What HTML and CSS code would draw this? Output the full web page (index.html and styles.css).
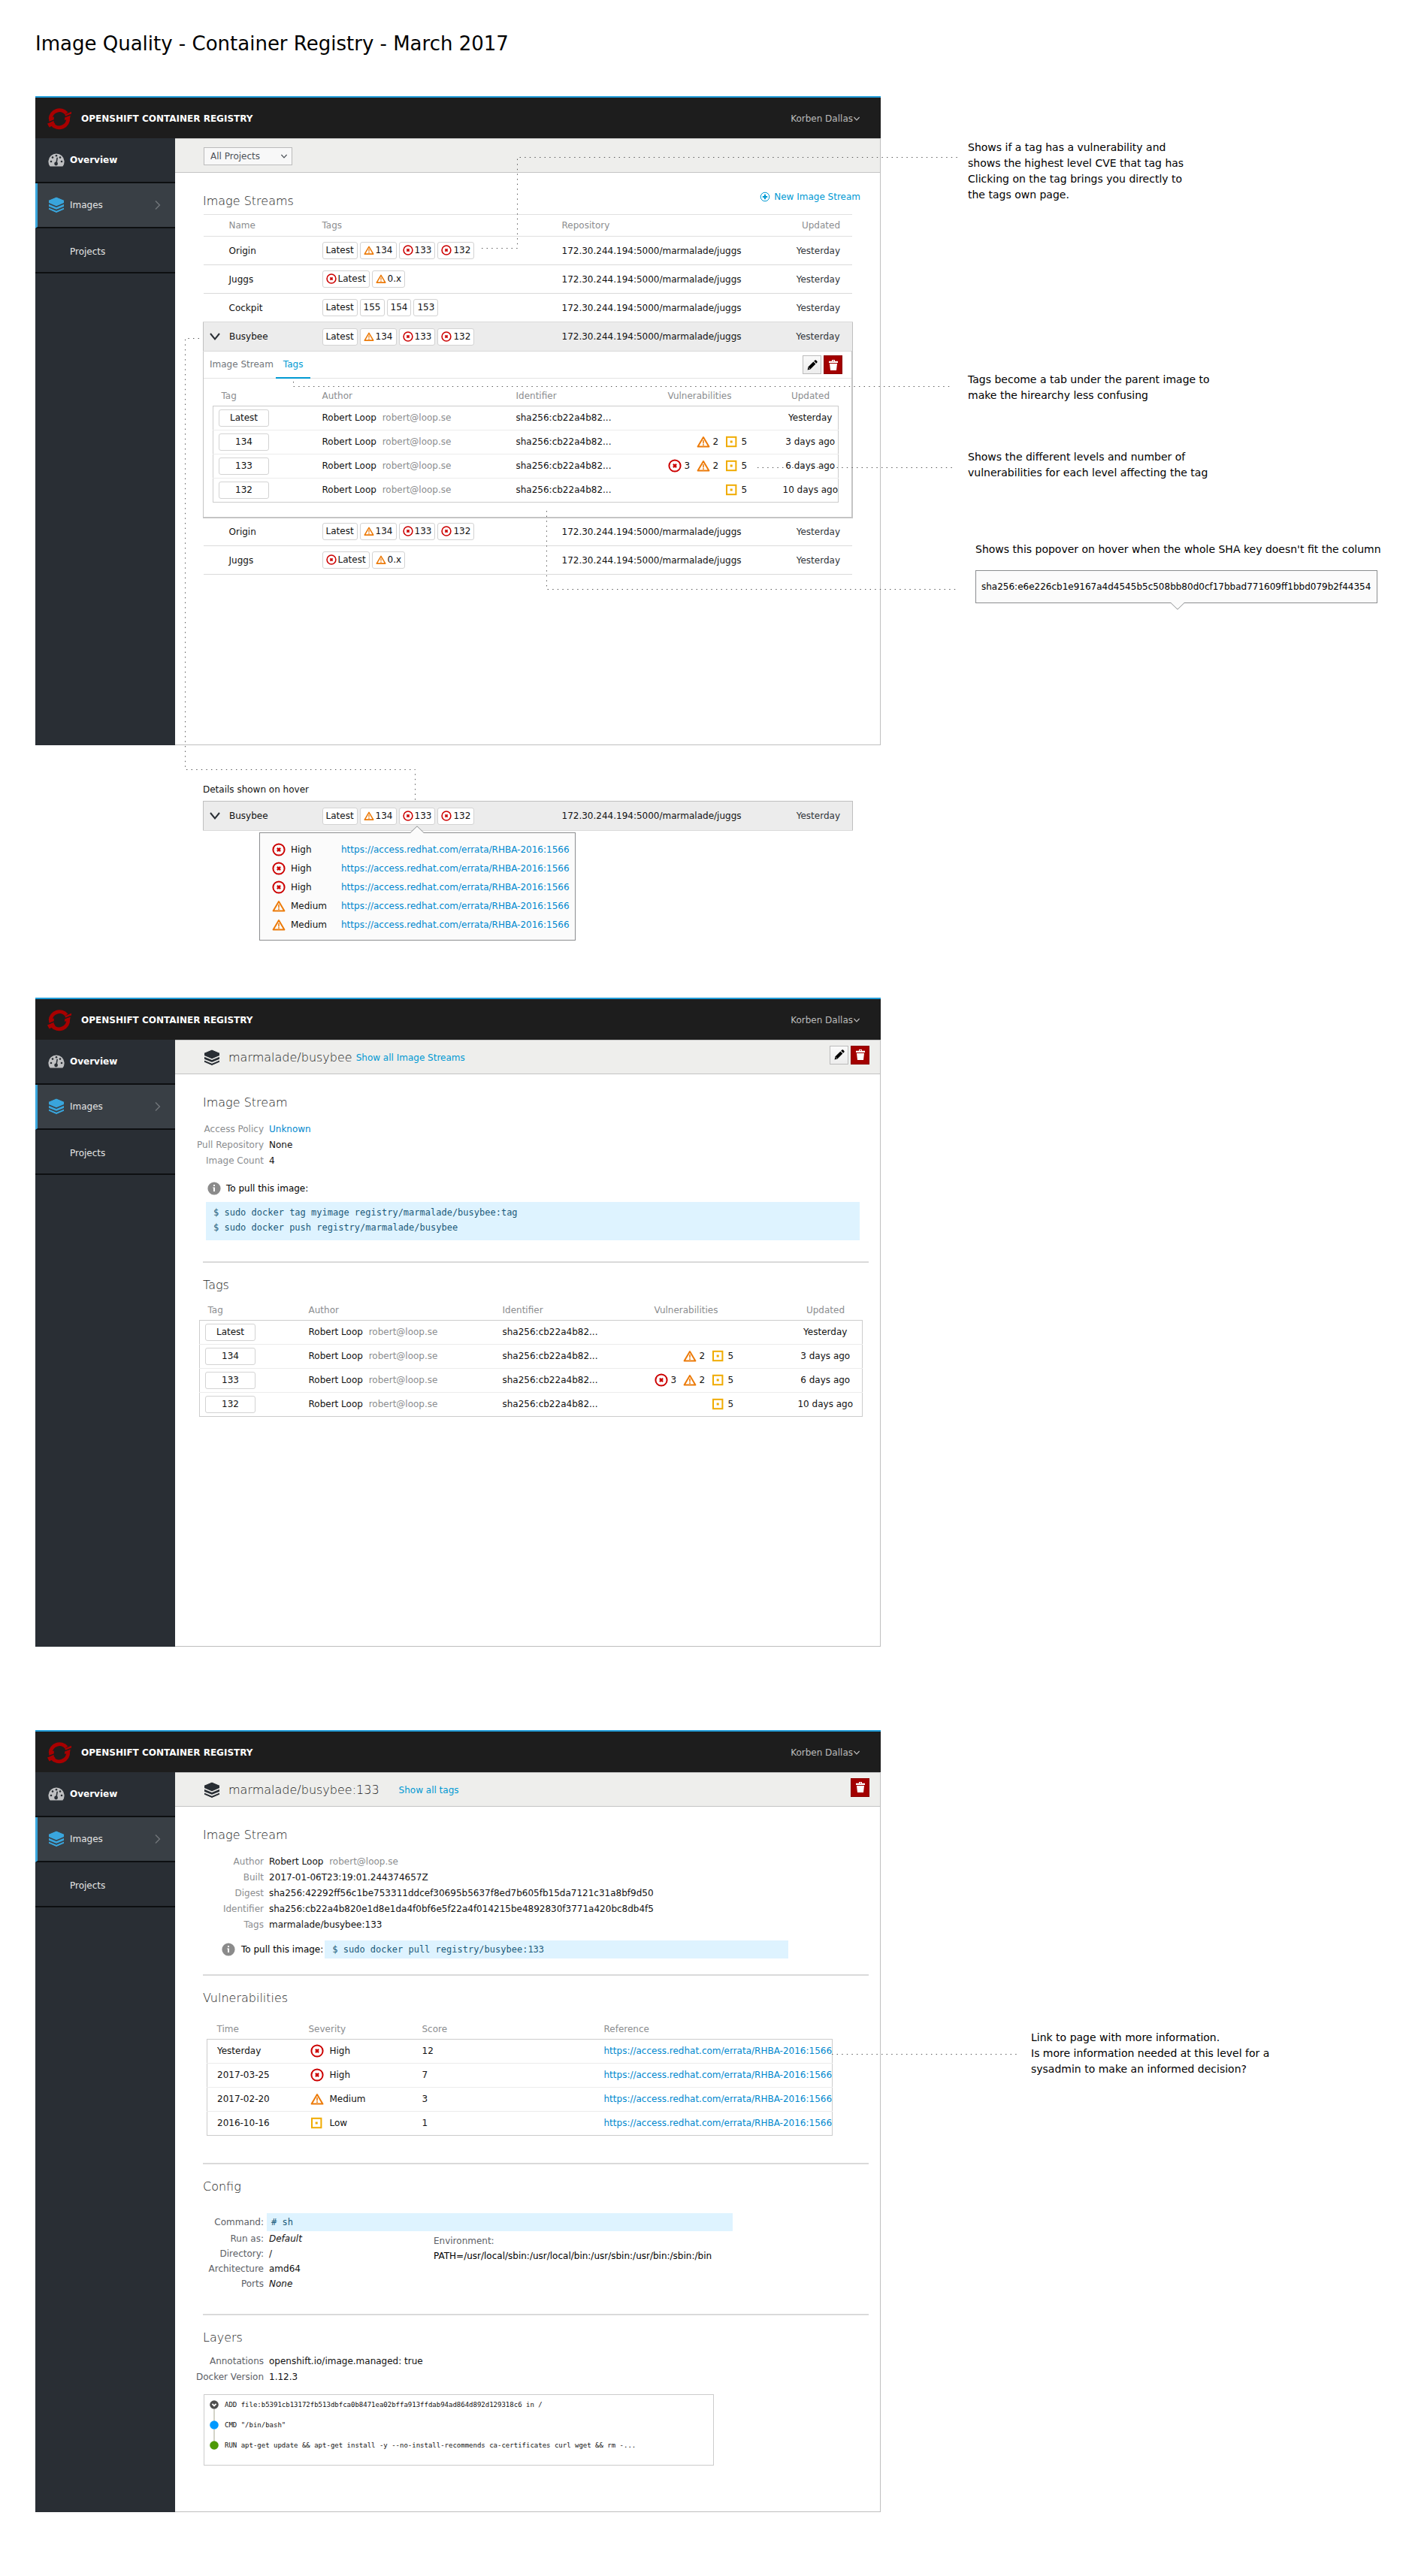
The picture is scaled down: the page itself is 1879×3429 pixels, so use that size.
FILE: index.html
```html
<!DOCTYPE html>
<html lang="en">
<head>
<meta charset="utf-8">
<title>Image Quality - Container Registry - March 2017</title>
<link rel="stylesheet" href="styles.css">
</head>
<body>
<svg class="sprite" aria-hidden="true">
  <symbol id="logo" viewBox="0 0 34 32">
    <path d="M5.2 16.2A12 12 0 0 1 26.4 9" fill="none" stroke="#a80000" stroke-width="5"/>
    <path d="M28.6 14.5A12 12 0 0 1 7.4 23.4" fill="none" stroke="#a80000" stroke-width="5"/>
    <path d="M24.5 10.2 33 6.8 33 9.6 25 13.4ZM24.2 14 31.8 11.4 31 15.4 24 18ZM3 15.6 9.8 13.6 9.8 17.4 3.4 20ZM1 22.6 9.6 18.4 9.6 20.6 11.6 23.2 3.6 27.4Z" fill="#a80000"/>
    <path d="M2.4 21 10.2 17.8M24 13.9 31.6 10.8" stroke="#1d1d1d" stroke-width="1.2"/>
  </symbol>
  <symbol id="gauge" viewBox="0 0 22 18">
    <path d="M2.6 17.6A10.6 10.6 0 1 1 19.4 17.6Z" fill="#bfc0c2"/>
    <g fill="#292e34"><circle cx="4" cy="11" r="1.3"/><circle cx="6" cy="5.6" r="1.3"/><circle cx="11" cy="3.3" r="1.3"/><circle cx="16" cy="5.6" r="1.3"/><circle cx="18" cy="11" r="1.3"/><circle cx="10.6" cy="14" r="2.4"/><path d="M11.4 5.8h1.6l-1.3 8.4h-1.6Z"/></g>
  </symbol>
  <symbol id="stack" viewBox="0 0 22 22">
    <path d="M11 0 21.5 4.4V17L11 21.6.5 17V4.4Z" fill="currentColor"/>
    <path class="cut" d="M.5 8.8 11 13.2 21.5 8.8M.5 13.4 11 17.8 21.5 13.4" fill="none" stroke-width="1.6"/>
  </symbol>
  <symbol id="high" viewBox="0 0 18 18">
    <circle cx="9" cy="9" r="7.6" fill="none" stroke="#cc0000" stroke-width="2"/>
    <path d="M6.9 6.9 11.1 11.1M11.1 6.9 6.9 11.1" stroke="#cc0000" stroke-width="2.2"/>
  </symbol>
  <symbol id="medium" viewBox="0 0 18 18">
    <path d="M9 3 16.4 15.6H1.6Z" fill="none" stroke="#ec7a08" stroke-width="2" stroke-linejoin="round"/>
    <path d="M9 7v4.4M9 12.2v1.8" stroke="#ec7a08" stroke-width="1.6"/>
  </symbol>
  <symbol id="low" viewBox="0 0 18 18">
    <rect x="2" y="2.800" width="12.4" height="12.4" fill="none" stroke="#f0ab00" stroke-width="2"/>
    <rect x="6.700" y="7.500" width="3" height="3" fill="#f0ab00"/>
  </symbol>
  <symbol id="down" viewBox="0 0 10 10">
    <path d="M1.4 3 5 6.8 8.6 3" fill="none" stroke="currentColor" stroke-width="1.2"/>
  </symbol>
  <symbol id="expand" viewBox="0 0 16 16">
    <path d="M2 4 8 11.400 14 4" fill="none" stroke="currentColor" stroke-width="2"/>
  </symbol>
  <symbol id="right" viewBox="0 0 10 14">
    <path d="M2 1.6 7.4 7 2 12.4" fill="none" stroke="currentColor" stroke-width="1.4"/>
  </symbol>
  <symbol id="plus" viewBox="0 0 14 14">
    <circle cx="7" cy="7" r="5.8" fill="none" stroke="currentColor"/>
    <path d="M7 3.8v6.4M3.8 7h6.4" stroke="currentColor" stroke-width="2.2"/>
  </symbol>
  <symbol id="pencil" viewBox="0 0 16 16">
    <path d="M1.6 14.4 2.4 10.6 9.4 3.6 12.4 6.6 5.4 13.6ZM10.2 2.8 11.4 1.6Q12.2 1 13 1.6L14.4 3Q15 3.8 14.4 4.6L13.2 5.8Z"/>
    <path d="M3.2 11.6 4.4 12.8" stroke="#fff"/>
  </symbol>
  <symbol id="trash" viewBox="0 0 16 16">
    <path d="M2 2.8H6V1h4V2.8H14V5H2ZM3 6H13L12 15H4Z" fill="#fff"/>
    <path d="M7 2h2v.8H7Z" fill="#a30000"/>
  </symbol>
  <symbol id="info" viewBox="0 0 18 18">
    <circle cx="9" cy="9" r="8.6" fill="#8b8b8b"/>
    <path d="M8 4h2v2H8ZM7.2 7.4H10V13H8V8.6H7.2Z" fill="#fff"/>
  </symbol>
</svg>

<h1 class="page-title">Image Quality - Container Registry - March 2017</h1>

<section class="board">
  <div class="board-main">
    <div class="window">
      <header class="topbar">
        <svg class="logo"><use href="#logo"/></svg>
        <span class="brand">OPENSHIFT CONTAINER REGISTRY</span>
        <button class="user" type="button">Korben Dallas<svg class="caret"><use href="#down"/></svg></button>
      </header>
      <nav class="sidebar">
        <a class="nav-item nav-strong" href="#"><svg class="nav-icon"><use href="#gauge"/></svg>Overview</a>
        <a class="nav-item nav-active" href="#"><svg class="nav-icon"><use href="#stack"/></svg>Images<svg class="nav-arrow"><use href="#right"/></svg></a>
        <a class="nav-item nav-plain" href="#">Projects</a>
      </nav>
      <main class="main">
        <div class="subheader">
          <label class="select">
            <select aria-label="Project"><option>All Projects</option></select>
            <svg class="caret"><use href="#down"/></svg>
          </label>
        </div>
        <div class="content content-list">
          <div class="list-head">
            <h2 class="heading">Image Streams</h2>
            <a class="new-link" href="#"><svg class="plus"><use href="#plus"/></svg>New Image Stream</a>
          </div>
          <table class="streams">
            <colgroup><col class="c-name"><col class="c-tags"><col><col class="c-date"></colgroup>
            <thead>
              <tr><th>Name</th><th>Tags</th><th>Repository</th><th>Updated</th></tr>
            </thead>
            <tbody>
              <tr>
                <td>Origin</td>
                <td><div class="chips"><a class="chip" href="#">Latest</a><a class="chip" href="#"><svg><use href="#medium"/></svg>134</a><a class="chip" href="#"><svg><use href="#high"/></svg>133</a><a class="chip" href="#"><svg><use href="#high"/></svg>132</a></div></td>
                <td>172.30.244.194:5000/marmalade/juggs</td><td>Yesterday</td>
              </tr>
              <tr>
                <td>Juggs</td>
                <td><div class="chips"><a class="chip" href="#"><svg><use href="#high"/></svg>Latest</a><a class="chip" href="#"><svg><use href="#medium"/></svg>0.x</a></div></td>
                <td>172.30.244.194:5000/marmalade/juggs</td><td>Yesterday</td>
              </tr>
              <tr>
                <td>Cockpit</td>
                <td><div class="chips"><a class="chip" href="#">Latest</a><a class="chip" href="#">155</a><a class="chip" href="#">154</a><a class="chip" href="#">153</a></div></td>
                <td>172.30.244.194:5000/marmalade/juggs</td><td>Yesterday</td>
              </tr>
              <tr class="open">
                <td><span class="row-name"><svg class="expander"><use href="#expand"/></svg>Busybee</span></td>
                <td><div class="chips"><a class="chip" href="#">Latest</a><a class="chip" href="#"><svg><use href="#medium"/></svg>134</a><a class="chip" href="#"><svg><use href="#high"/></svg>133</a><a class="chip" href="#"><svg><use href="#high"/></svg>132</a></div></td>
                <td>172.30.244.194:5000/marmalade/juggs</td><td>Yesterday</td>
              </tr>
              <tr class="panel-row">
                <td class="panel" colspan="4">
                  <div class="tabs">
                    <button class="tab" type="button">Image Stream</button>
                    <button class="tab tab-on" type="button">Tags</button>
                    <div class="tab-actions">
                      <button class="action" type="button" aria-label="Edit"><svg><use href="#pencil"/></svg></button>
                      <button class="action action-delete" type="button" aria-label="Delete"><svg><use href="#trash"/></svg></button>
                    </div>
                  </div>
                  <table class="tags tags-nested">
                    <colgroup><col class="t-tag"><col class="t-author"><col class="t-id"><col><col class="t-date"></colgroup>
                    <thead><tr><th>Tag</th><th>Author</th><th>Identifier</th><th>Vulnerabilities</th><th>Updated</th></tr></thead>
                    <tbody>
                      <tr><td><a class="chip chip-wide" href="#">Latest</a></td><td>Robert Loop <span class="mail">robert@loop.se</span></td><td>sha256:cb22a4b82...</td><td></td><td>Yesterday</td></tr>
                      <tr><td><a class="chip chip-wide" href="#">134</a></td><td>Robert Loop <span class="mail">robert@loop.se</span></td><td>sha256:cb22a4b82...</td><td><div class="counts"><span></span><span><svg><use href="#medium"/></svg>2</span><span><svg><use href="#low"/></svg>5</span></div></td><td>3 days ago</td></tr>
                      <tr><td><a class="chip chip-wide" href="#">133</a></td><td>Robert Loop <span class="mail">robert@loop.se</span></td><td>sha256:cb22a4b82...</td><td><div class="counts"><span><svg><use href="#high"/></svg>3</span><span><svg><use href="#medium"/></svg>2</span><span><svg><use href="#low"/></svg>5</span></div></td><td>6 days ago</td></tr>
                      <tr><td><a class="chip chip-wide" href="#">132</a></td><td>Robert Loop <span class="mail">robert@loop.se</span></td><td>sha256:cb22a4b82...</td><td><div class="counts"><span></span><span></span><span><svg><use href="#low"/></svg>5</span></div></td><td>10 days ago</td></tr>
                    </tbody>
                  </table>
                </td>
              </tr>
              <tr>
                <td>Origin</td>
                <td><div class="chips"><a class="chip" href="#">Latest</a><a class="chip" href="#"><svg><use href="#medium"/></svg>134</a><a class="chip" href="#"><svg><use href="#high"/></svg>133</a><a class="chip" href="#"><svg><use href="#high"/></svg>132</a></div></td>
                <td>172.30.244.194:5000/marmalade/juggs</td><td>Yesterday</td>
              </tr>
              <tr>
                <td>Juggs</td>
                <td><div class="chips"><a class="chip" href="#"><svg><use href="#high"/></svg>Latest</a><a class="chip" href="#"><svg><use href="#medium"/></svg>0.x</a></div></td>
                <td>172.30.244.194:5000/marmalade/juggs</td><td>Yesterday</td>
              </tr>
            </tbody>
          </table>
        </div>
      </main>
    </div>

    <div class="hover-demo">
      <p class="hover-label">Details shown on hover</p>
      <table class="streams">
        <colgroup><col class="c-name"><col class="c-tags"><col><col class="c-date"></colgroup>
        <tbody>
          <tr class="open">
            <td><span class="row-name"><svg class="expander"><use href="#expand"/></svg>Busybee</span></td>
            <td><div class="chips"><a class="chip" href="#">Latest</a><a class="chip" href="#"><svg><use href="#medium"/></svg>134</a><a class="chip" href="#"><svg><use href="#high"/></svg>133</a><a class="chip" href="#"><svg><use href="#high"/></svg>132</a></div></td>
            <td>172.30.244.194:5000/marmalade/juggs</td><td>Yesterday</td>
          </tr>
        </tbody>
      </table>
      <div class="popover popover-errata">
        <svg class="beak beak-up" viewBox="0 0 18 10"><path d="M0 9.5 9 .8 18 9.5V10H0Z" fill="#fbfbfb"/><path d="M0 9.5 9 .8 18 9.5" fill="none" stroke="#8b8d8f"/></svg>
        <ul class="errata">
          <li><svg><use href="#high"/></svg><span>High</span><a href="#">https://access.redhat.com/errata/RHBA-2016:1566</a></li>
          <li><svg><use href="#high"/></svg><span>High</span><a href="#">https://access.redhat.com/errata/RHBA-2016:1566</a></li>
          <li><svg><use href="#high"/></svg><span>High</span><a href="#">https://access.redhat.com/errata/RHBA-2016:1566</a></li>
          <li><svg><use href="#medium"/></svg><span>Medium</span><a href="#">https://access.redhat.com/errata/RHBA-2016:1566</a></li>
          <li><svg><use href="#medium"/></svg><span>Medium</span><a href="#">https://access.redhat.com/errata/RHBA-2016:1566</a></li>
        </ul>
      </div>
    </div>
  </div>

  <aside class="notes">
    <p class="note note-vulnerability">Shows if a tag has a vulnerability and<br>shows the highest level CVE that tag has<br>Clicking on the tag brings you directly to<br>the tags own page.</p>
    <p class="note note-tabs">Tags become a tab under the parent image to<br>make the hirearchy less confusing</p>
    <p class="note note-levels">Shows the different levels and number of<br>vulnerabilities for each level affecting the tag</p>
    <div class="sha-demo">
      <p class="note">Shows this popover on hover when the whole SHA key doesn't fit the column</p>
      <div class="popover popover-sha">sha256:e6e226cb1e9167a4d4545b5c508bb80d0cf17bbad771609ff1bbd079b2f44354
        <svg class="beak beak-down" viewBox="0 0 18 10"><path d="M0 .5 9 9.2 18 .5V0H0Z" fill="#fbfbfb"/><path d="M0 .5 9 9.2 18 .5" fill="none" stroke="#8b8d8f"/></svg>
      </div>
    </div>
  </aside>

  <svg class="connectors" aria-hidden="true">
    <path d="M594 202.500H641.500V81.500H1229"/>
    <path d="M343.500 380V386.500H1218"/>
    <path d="M961 494.500H1225"/>
    <path d="M680.500 552V656.500H1228"/>
    <path d="M218 322.500H199.500V896.500H505.500V938"/>
  </svg>
</section>

<section class="board">
  <div class="board-main">
    <div class="window">
      <header class="topbar">
        <svg class="logo"><use href="#logo"/></svg>
        <span class="brand">OPENSHIFT CONTAINER REGISTRY</span>
        <button class="user" type="button">Korben Dallas<svg class="caret"><use href="#down"/></svg></button>
      </header>
      <nav class="sidebar">
        <a class="nav-item nav-strong" href="#"><svg class="nav-icon"><use href="#gauge"/></svg>Overview</a>
        <a class="nav-item nav-active" href="#"><svg class="nav-icon"><use href="#stack"/></svg>Images<svg class="nav-arrow"><use href="#right"/></svg></a>
        <a class="nav-item nav-plain" href="#">Projects</a>
      </nav>
      <main class="main">
        <div class="subheader">
          <svg class="stack-icon"><use href="#stack"/></svg>
          <h2 class="heading">marmalade/busybee</h2>
          <a class="sub-link" href="#">Show all Image Streams</a>
          <div class="sub-actions">
            <button class="action" type="button" aria-label="Edit"><svg><use href="#pencil"/></svg></button>
            <button class="action action-delete" type="button" aria-label="Delete"><svg><use href="#trash"/></svg></button>
          </div>
        </div>
        <div class="content">
          <h3 class="heading">Image Stream</h3>
          <dl class="facts">
            <dt>Access Policy</dt><dd><a href="#">Unknown</a></dd>
            <dt>Pull Repository</dt><dd>None</dd>
            <dt>Image Count</dt><dd>4</dd>
          </dl>
          <p class="pull"><svg class="info"><use href="#info"/></svg>To pull this image:</p>
          <pre class="code code-block">$ sudo docker tag myimage registry/marmalade/busybee:tag
$ sudo docker push registry/marmalade/busybee</pre>
          <hr class="rule rule-pull">
          <h3 class="heading">Tags</h3>
          <table class="tags tags-page">
            <colgroup><col class="t-tag"><col class="t-author"><col class="t-id"><col><col class="t-date"></colgroup>
            <thead><tr><th>Tag</th><th>Author</th><th>Identifier</th><th>Vulnerabilities</th><th>Updated</th></tr></thead>
            <tbody>
              <tr><td><a class="chip chip-wide" href="#">Latest</a></td><td>Robert Loop <span class="mail">robert@loop.se</span></td><td>sha256:cb22a4b82...</td><td></td><td>Yesterday</td></tr>
              <tr><td><a class="chip chip-wide" href="#">134</a></td><td>Robert Loop <span class="mail">robert@loop.se</span></td><td>sha256:cb22a4b82...</td><td><div class="counts"><span></span><span><svg><use href="#medium"/></svg>2</span><span><svg><use href="#low"/></svg>5</span></div></td><td>3 days ago</td></tr>
              <tr><td><a class="chip chip-wide" href="#">133</a></td><td>Robert Loop <span class="mail">robert@loop.se</span></td><td>sha256:cb22a4b82...</td><td><div class="counts"><span><svg><use href="#high"/></svg>3</span><span><svg><use href="#medium"/></svg>2</span><span><svg><use href="#low"/></svg>5</span></div></td><td>6 days ago</td></tr>
              <tr><td><a class="chip chip-wide" href="#">132</a></td><td>Robert Loop <span class="mail">robert@loop.se</span></td><td>sha256:cb22a4b82...</td><td><div class="counts"><span></span><span></span><span><svg><use href="#low"/></svg>5</span></div></td><td>10 days ago</td></tr>
            </tbody>
          </table>
        </div>
      </main>
    </div>
  </div>
</section>

<section class="board board-last">
  <div class="board-main">
    <div class="window">
      <header class="topbar">
        <svg class="logo"><use href="#logo"/></svg>
        <span class="brand">OPENSHIFT CONTAINER REGISTRY</span>
        <button class="user" type="button">Korben Dallas<svg class="caret"><use href="#down"/></svg></button>
      </header>
      <nav class="sidebar">
        <a class="nav-item nav-strong" href="#"><svg class="nav-icon"><use href="#gauge"/></svg>Overview</a>
        <a class="nav-item nav-active" href="#"><svg class="nav-icon"><use href="#stack"/></svg>Images<svg class="nav-arrow"><use href="#right"/></svg></a>
        <a class="nav-item nav-plain" href="#">Projects</a>
      </nav>
      <main class="main">
        <div class="subheader">
          <svg class="stack-icon"><use href="#stack"/></svg>
          <h2 class="heading">marmalade/busybee:133</h2>
          <a class="sub-link sub-link-far" href="#">Show all tags</a>
          <div class="sub-actions">
            <button class="action action-delete" type="button" aria-label="Delete"><svg><use href="#trash"/></svg></button>
          </div>
        </div>
        <div class="content content-last">
          <h3 class="heading">Image Stream</h3>
          <dl class="facts">
            <dt>Author</dt><dd>Robert Loop <span class="mail">robert@loop.se</span></dd>
            <dt>Built</dt><dd>2017-01-06T23:19:01.244374657Z</dd>
            <dt>Digest</dt><dd>sha256:42292ff56c1be753311ddcef30695b5637f8ed7b605fb15da7121c31a8bf9d50</dd>
            <dt>Identifier</dt><dd>sha256:cb22a4b820e1d8e1da4f0bf6e5f22a4f014215be4892830f3771a420bc8db4f5</dd>
            <dt>Tags</dt><dd>marmalade/busybee:133</dd>
          </dl>
          <div class="pull pull-inline"><svg class="info"><use href="#info"/></svg>To pull this image:<code class="code code-line">$ sudo docker pull registry/busybee:133</code></div>
          <hr class="rule rule-inline">
          <h3 class="heading">Vulnerabilities</h3>
          <table class="tags vulns">
            <colgroup><col class="v-time"><col class="v-severity"><col class="v-score"><col></colgroup>
            <thead><tr><th>Time</th><th>Severity</th><th>Score</th><th>Reference</th></tr></thead>
            <tbody>
              <tr><td>Yesterday</td><td><span class="severity"><svg><use href="#high"/></svg>High</span></td><td>12</td><td><a href="#">https://access.redhat.com/errata/RHBA-2016:1566</a></td></tr>
              <tr><td>2017-03-25</td><td><span class="severity"><svg><use href="#high"/></svg>High</span></td><td>7</td><td><a href="#">https://access.redhat.com/errata/RHBA-2016:1566</a></td></tr>
              <tr><td>2017-02-20</td><td><span class="severity"><svg><use href="#medium"/></svg>Medium</span></td><td>3</td><td><a href="#">https://access.redhat.com/errata/RHBA-2016:1566</a></td></tr>
              <tr><td>2016-10-16</td><td><span class="severity"><svg><use href="#low"/></svg>Low</span></td><td>1</td><td><a href="#">https://access.redhat.com/errata/RHBA-2016:1566</a></td></tr>
            </tbody>
          </table>
          <hr class="rule rule-vulns">
          <h3 class="heading">Config</h3>
          <dl class="facts facts-dark facts-command">
            <dt>Command:</dt><dd><code class="code code-line"># sh</code></dd>
          </dl>
          <div class="config">
            <dl class="facts facts-dark">
              <dt>Run as:</dt><dd><em>Default</em></dd>
              <dt>Directory:</dt><dd>/</dd>
              <dt>Architecture</dt><dd>amd64</dd>
              <dt>Ports</dt><dd><em>None</em></dd>
            </dl>
            <div class="environment">
              <p class="muted">Environment:</p>
              <p>PATH=/usr/local/sbin:/usr/local/bin:/usr/sbin:/usr/bin:/sbin:/bin</p>
            </div>
          </div>
          <hr class="rule rule-config">
          <h3 class="heading">Layers</h3>
          <dl class="facts facts-dark facts-layers">
            <dt>Annotations</dt><dd>openshift.io/image.managed: true</dd>
            <dt>Docker Version</dt><dd>1.12.3</dd>
          </dl>
          <ol class="layers">
            <li><svg viewBox="0 0 12 12"><circle cx="6" cy="6" r="5.800" fill="#4d4d4d"/><path d="M3.400 4.800 6 7.400 8.600 4.800" fill="none" stroke="#fff" stroke-width="1.800"/></svg>ADD file:b5391cb13172fb513dbfca0b8471ea02bffa913ffdab94ad864d892d129318c6 in /</li>
            <li><svg viewBox="0 0 12 12"><path d="M6 2V-15" stroke="#d3d3c8" stroke-width="2"/><circle cx="6" cy="6" r="5.800" fill="#0099ff"/></svg>CMD "/bin/bash"</li>
            <li><svg viewBox="0 0 12 12"><path d="M6 2V-15" stroke="#d3d3c8" stroke-width="2"/><circle cx="6" cy="6" r="5.800" fill="#4e9a06"/></svg>RUN apt-get update &amp;&amp; apt-get install -y --no-install-recommends ca-certificates curl wget &amp;&amp; rm -...</li>
          </ol>
        </div>
      </main>
    </div>
  </div>

  <aside class="notes notes-last">
    <p class="note note-link">Link to page with more information.<br>Is more information needed at this level for a<br>sysadmin to make an informed decision?</p>
  </aside>

  <svg class="connectors" aria-hidden="true">
    <path d="M1060 431.500H1309"/>
  </svg>
</section>
</body>
</html>
```

FILE: styles.css
```css
* { box-sizing: border-box; }

body {
  margin: 0;
  padding: 42px 0 86px 47px;
  background: #fff;
  color: #111;
  font: 12px/16px "DejaVu Sans", sans-serif;
}

h1, h2, h3, p, dl, dd, ul, ol, pre { margin: 0; padding: 0; }
ul, ol { list-style: none; }
a { color: #0088ce; text-decoration: none; }
button, select { font: inherit; }
.sprite { display: block; width: 0; height: 0; }

.page-title {
  color: #000;
  font-size: 26px;
  font-weight: 400;
  line-height: 32px;
}

/* Each board pairs a mocked-up window with its notes */
.board {
  position: relative;
  display: grid;
  grid-template-columns: minmax(0, 1125fr) minmax(0, 707fr);
  margin-top: 54px;
}
.board + .board { margin-top: 76px; }
.board + .board-last { margin-top: 111px; }

.connectors {
  position: absolute;
  top: 0;
  left: 0;
  width: 100%;
  height: 100%;
  pointer-events: none;
}
.connectors path {
  fill: none;
  stroke: #555;
  stroke-width: 1;
  stroke-dasharray: 1.4 5.2;
}

/* Window frame */
.window {
  display: grid;
  grid-template-columns: 186px minmax(0, 1fr);
  grid-template-rows: auto 1fr;
  min-height: 864px;
}
.topbar {
  grid-column: 1 / -1;
  display: flex;
  align-items: center;
  height: 56px;
  padding: 1px 27px 0 15px;
  border-top: 2px solid #1f9bd7;
  background: #1d1d1d;
}
.logo { width: 34px; height: 32px; margin-right: 12px; }
.brand { color: #fff; font-weight: 700; }
.user {
  display: flex;
  align-items: center;
  margin-left: auto;
  padding: 0;
  border: 0;
  background: none;
  color: #bcbcbc;
}
.caret { width: 10px; height: 10px; }

.sidebar { background: #292e34; }
.nav-item {
  display: flex;
  align-items: center;
  height: 60px;
  padding: 0 18px 0 17px;
  border-bottom: 2px solid #0d0f11;
  color: #e6e6e6;
}
.nav-strong { color: #fff; font-weight: 700; }
.nav-active { padding-left: 14px; border-left: 3px solid #39a5dc; background: #393f45; }
.nav-plain { padding-top: 4px; padding-left: 46px; }
.nav-icon { width: 22px; height: 22px; margin-right: 7px; color: #39a5dc; }
.nav-active .nav-icon { stroke: #393f45; }
.nav-arrow { width: 10px; height: 14px; margin-left: auto; color: #72767b; }

.main {
  border: solid #bfbfbf;
  border-width: 0 1px 1px 0;
  background: #fff;
}
.subheader {
  display: flex;
  align-items: center;
  height: 46px;
  padding: 2px 14px 0 38px;
  border: solid #c4c4c4;
  border-width: 1px 0;
  background: #eeeeec;
}
.select { position: relative; display: block; }
.select select {
  width: 118px;
  height: 24px;
  padding: 0 8px;
  border: 1px solid #bbb;
  border-radius: 0;
  background: #f8f8f8;
  color: #4d5258;
  appearance: none;
}
.select .caret { position: absolute; top: 7px; right: 6px; color: #4d5258; }
.stack-icon { width: 22px; height: 22px; margin-right: 11px; color: #292e34; stroke: #eeeeec; }
.sub-link { margin-left: 5px; color: #0099d3; }
.sub-link-far { margin-left: 26px; }
.sub-actions { display: flex; gap: 3px; margin: -8px 0 0 auto; }

.heading {
  color: #222;
  font-family: "DejaVu Sans Light", "DejaVu Sans", sans-serif;
  font-size: 16px;
  font-weight: 200;
  line-height: 20px;
}

.action {
  display: grid;
  place-items: center;
  width: 25px;
  height: 25px;
  padding: 0;
  border: 1px solid #bbb;
  background: linear-gradient(#fafafa, #ededed);
}
.action svg { width: 16px; height: 16px; }
.action-delete { border-color: #8b0000; background: #a30000; }

.content { padding: 28px 15px 20px 37px; }
.content-list { padding-top: 24px; }
.content-last { padding-bottom: 61px; }

/* Image stream list */
.list-head {
  display: flex;
  justify-content: space-between;
  align-items: flex-end;
  height: 24px;
  margin: 0 11px 7px 0;
}
.new-link { display: flex; align-self: flex-start; align-items: center; color: #0099d3; }
.plus { width: 14px; height: 14px; margin-right: 5px; }

table { border-collapse: collapse; table-layout: fixed; }
th { color: #8b8d8f; font-weight: 400; text-align: left; }
th, td { padding: 0; white-space: nowrap; }

.streams { width: calc(100% - 21px); }
.c-name { width: 158px; }
.c-tags { width: 319px; }
.c-date { width: 100px; }
.streams > thead th { height: 29px; border: solid #e0e0e0; border-width: 1px 0; }
.streams > tbody > tr > td { height: 38px; border-bottom: 1px solid #dadada; }
.streams > * > tr > :first-child { padding-left: 34px; }
.streams > * > tr > :last-child { padding-right: 16px; text-align: right; }
.streams > tbody > tr > td:last-child { color: #30343a; }
.streams > tbody > .open > td { height: 39px; }
.open { border: 1px solid #bfbfbf; background: #ececec; }
.row-name { display: flex; align-items: center; gap: 11px; margin-left: -27px; }
.expander { width: 16px; height: 16px; color: #292e34; }

.chips { display: flex; gap: 3px; }
.chip {
  display: flex;
  align-items: center;
  gap: 2px;
  height: 23px;
  padding: 0 4px 1px;
  border: 1px solid #d3d3d3;
  border-radius: 3px;
  background: #fff;
  color: #111;
}
.chip svg { width: 14px; height: 14px; }
.chip-wide { justify-content: center; width: 67px; margin-left: 7px; }

.streams > tbody > .panel-row > .panel {
  height: auto;
  padding: 0;
  border: solid #c4c4c4;
  border-width: 1px 2px 2px 1px;
  text-align: left;
  color: #111;
}
.tabs {
  display: flex;
  align-items: stretch;
  height: 36px;
  padding-left: 8px;
  border-bottom: 1px solid #e4e4e4;
}
.tab { height: 36px; padding: 0; border: 0; border-bottom: 2px solid transparent; background: none; color: #72767b; }
.tab-on { margin-left: 3px; padding: 0 10px; border-color: #0099d3; color: #0099d3; }
.tab-actions { display: flex; gap: 3px; margin: 5px 12px 0 auto; }

/* Boxed tables */
.tags th { height: 36px; padding-bottom: 5px; vertical-align: bottom; }
.tags td { height: 32px; border-bottom: 1px solid #ececec; }
.tags tbody { border: 1px solid #ccc; }
.tags tr:last-child td { border-bottom-color: #ccc; }
.tags th:first-child { padding-left: 11px; }
.t-tag { width: 145px; }
.t-author { width: 258px; }
.t-id { width: 202px; }
.tags-nested { width: calc(100% - 29px); margin: 0 17px 19px 12px; }
.tags-nested .t-date { width: 74px; }
.tags-page { width: calc(100% - 3px); margin: 0 8px 0 -5px; }
.tags-page .t-date { width: 98px; }
.tags-nested th:last-child, .tags-nested td:last-child,
.tags-page th:last-child, .tags-page td:last-child { text-align: center; }
.mail { margin-left: 4px; color: #8b8d8f; }
.counts { display: grid; grid-template-columns: 38px 38px 38px; }
.counts span { display: flex; align-items: center; gap: 4px; }
.counts svg, .severity svg, .errata svg { width: 18px; height: 18px; }

.vulns { width: calc(100% - 53px); margin: 8px 0 0 5px; }
.vulns th:first-child, .vulns td:first-child { padding-left: 13px; }
.v-time { width: 135px; }
.v-severity { width: 151px; }
.v-score { width: 242px; }
.severity { display: flex; align-items: center; gap: 8px; margin-left: 2px; }

/* Hover details */
.hover-demo { margin: 49px 16px 0 223px; }
.hover-label { margin-bottom: 5px; line-height: 20px; }
.popover { position: relative; border: 1px solid #8b8d8f; background: #fbfbfb; }
.popover-errata { width: 421px; margin: 2px 0 0 75px; padding: 9px 8px 8px 16px; }
.beak { position: absolute; width: 18px; height: 10px; }
.beak-up { top: -10px; left: 200px; }
.beak-down { bottom: -10px; left: 259px; }
.errata li {
  display: grid;
  grid-template-columns: 25px 67px auto;
  align-items: center;
  height: 25px;
  white-space: nowrap;
}

/* Label and value pairs */
.facts {
  display: grid;
  grid-template-columns: 94px minmax(0, 1fr);
  column-gap: 7px;
  margin: 15px 0 0 -13px;
  line-height: 21px;
}
.facts dt { color: #8b8d8f; text-align: right; white-space: nowrap; }
.facts-dark dt, .muted { color: #5c6066; }
.facts-command { margin-top: 25px; line-height: 24px; }
.facts-command .code-line { display: block; max-width: 620px; margin-left: -3px; padding-left: 6px; }
.facts-layers { margin-top: 11px; }

.pull { display: flex; align-items: center; gap: 7px; margin: 17px 0 0 6px; color: #000; }
.pull-inline { gap: 8px; margin: 10px 0 0 25px; }
.info { width: 18px; height: 18px; }
.code {
  background: #def3ff;
  color: #1b5a7a;
  font: 12px/20px "DejaVu Sans Mono", monospace;
}
.code-block { margin: 9px 12px 0 4px; padding: 4px 10px 7px; }
.code-line { height: 24px; padding: 0 10px; line-height: 24px; }
.pull-inline .code-line { flex: 0 1 617px; margin-left: -6px; }

.rule { height: 2px; margin: 0 0 20px; border: 0; background: #dadada; }
.rule-pull { margin-top: 28px; }
.rule-inline { margin-top: 21px; }
.rule-vulns { margin-top: 36px; }
.rule-config { margin-top: 30px; }

.config { display: grid; grid-template-columns: 307px minmax(0, 1fr); line-height: 20px; }
.config .facts { margin-top: 0; line-height: 20px; }
.environment { padding-top: 3px; color: #000; }

.layers {
  max-width: 679px;
  margin: 12px 0 0 1px;
  padding: 0 6px 12px 7px;
  border: 1px solid #ccc;
  color: #111;
  font: 9px/27px "DejaVu Sans Mono", monospace;
}
.layers li { display: flex; align-items: center; gap: 8px; height: 27px; white-space: nowrap; }
.layers svg { width: 12px; height: 12px; overflow: visible; }

/* Notes */
.notes { padding: 58px 20px 0 116px; }
.notes-last { padding-left: 200px; }
.note { color: #000; font-size: 14px; line-height: 21px; white-space: nowrap; }
.note-tabs { margin-top: 225px; }
.note-levels { margin-top: 61px; }
.note-link { margin-top: 341px; }
.sha-demo { margin: 81px 0 0 10px; }
.popover-sha { max-width: 535px; margin-top: 17px; padding: 12px 7px; line-height: 18px; color: #000; }
```
